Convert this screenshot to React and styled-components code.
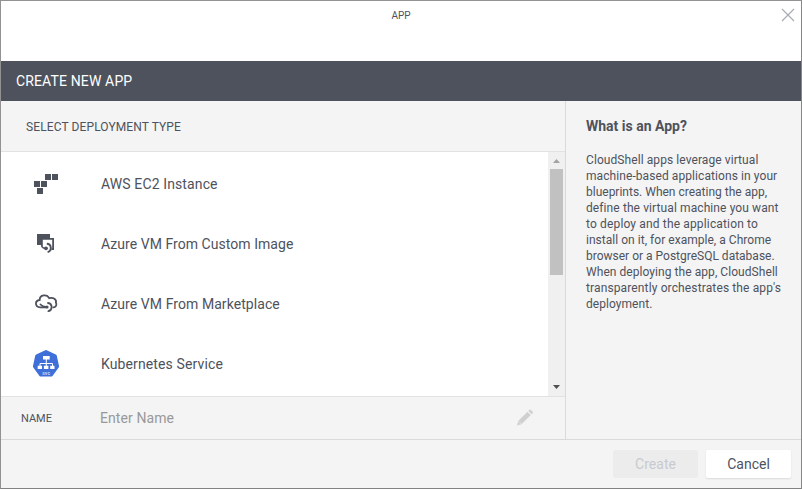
import React from "react";
import styled, { createGlobalStyle } from "styled-components";

const GlobalStyle = createGlobalStyle`
  * { box-sizing: border-box; }
  body { margin: 0; font-family: Roboto, "Liberation Sans", sans-serif; color: #4e525d; }
  h1, h2, h3, p, ul { margin: 0; padding: 0; }
  button, input { font-family: inherit; }
`;

const Dialog = styled.div`
  width: 802px;
  height: 489px;
  display: flex;
  flex-direction: column;
  background: #f4f4f4;
  border: 1px solid #929292;
  border-right-color: #868686;
  border-bottom-color: #828282;
`;

const TopBar = styled.header`
  flex: 0 0 60px;
  display: grid;
  grid-template-columns: 30px 1fr 30px;
  align-items: start;
  background: #fff;
`;

const TopTitle = styled.h1`
  grid-column: 2;
  padding-top: 8px;
  text-align: center;
  font-size: 10px;
  line-height: 14px;
  font-weight: 400;
`;

const CloseButton = styled.button`
  display: flex;
  width: 14px;
  height: 14px;
  margin: 7px 0 0 10px;
  padding: 0;
  border: 0;
  background: none;
`;

const TitleBar = styled.h2`
  flex: 0 0 40px;
  padding-left: 15px;
  background: #4e525d;
  color: #fff;
  font-size: 14px;
  line-height: 40px;
  font-weight: 400;
  letter-spacing: 0.14px;
`;

const Body = styled.div`
  flex: 0 0 338px;
  display: flex;
`;

const Main = styled.main`
  flex: 0 0 564px;
  display: flex;
  flex-direction: column;
`;

const SectionHeader = styled.h3`
  flex: 0 0 51px;
  padding: 2px 0 0 25px;
  border-bottom: 1px solid #e2e2e2;
  font-size: 12px;
  line-height: 48px;
  font-weight: 400;
  letter-spacing: 0.11px;
`;

const ListArea = styled.div`
  flex: 0 0 244px;
  display: flex;
  background: #fff;
`;

const List = styled.ul`
  flex: 1;
  padding-top: 2px;
  list-style: none;
`;

const Item = styled.li`
  height: 60px;
  display: flex;
  align-items: center;
  font-size: 14px;
  letter-spacing: ${(p) => p.$spacing}px;
`;

const IconSlot = styled.span`
  flex: 0 0 100px;
  height: 60px;
  display: flex;
  padding-left: 30px;

  svg { display: block; margin-top: 14px; }
`;

const Scrollbar = styled.div`
  flex: 0 0 17px;
  display: flex;
  flex-direction: column;
  align-items: center;
  background: #f0f0f0;
`;

const Arrow = styled.svg`
  flex: 0 0 17px;
  width: 17px;
  height: 17px;
  fill: ${(p) => p.$color};
`;

const Track = styled.div`
  flex: 1;
  width: 13px;
`;

const Thumb = styled.div`
  height: 106px;
  background: #c1c1c1;
`;

const NameRow = styled.label`
  flex: 0 0 43px;
  display: flex;
  align-items: center;
  padding: 0 31px 0 20px;
  border-top: 1px solid #e2e2e2;
`;

const NameLabel = styled.span`
  flex: 0 0 79px;
  font-size: 11px;
`;

const NameInput = styled.input`
  flex: 1;
  min-width: 0;
  height: 30px;
  padding: 0;
  border: 0;
  background: none;
  font-size: 14px;
  letter-spacing: 0.08px;

  &::placeholder { color: #999; opacity: 1; }
`;

const Help = styled.aside`
  flex: 1;
  padding: 16px 15px 0 20px;
  border-left: 1px solid #dadada;
`;

const HelpTitle = styled.h3`
  font-size: 14px;
  line-height: 18px;
  font-weight: 700;
`;

const HelpText = styled.p`
  padding-top: 17px;
  font-size: 12px;
  line-height: 16px;
  white-space: nowrap;
`;

const HelpLine = styled.span`
  display: block;
  letter-spacing: ${(p) => p.$spacing}px;
`;

const Footer = styled.footer`
  flex: 1;
  display: flex;
  justify-content: flex-end;
  gap: 8px;
  padding: 10px 10px 0 0;
  border-top: 1px solid #dadada;
`;

const Button = styled.button`
  width: 85px;
  height: 28px;
  padding: 0;
  border: 0;
  border-radius: 2px;
  font-size: 14px;
  line-height: 28px;
  background: ${(p) => (p.disabled ? "#ececec" : "#fff")};
  color: ${(p) => (p.disabled ? "#c8cad0" : "#4e525d")};
  box-shadow: ${(p) => (p.disabled ? "none" : "0 1px 2px rgba(0,0,0,.1)")};
`;

const AwsIcon = () => (
  <svg width="32" height="32" viewBox="0 0 32 32" fill="#4e525d">
    <path d="M14 6h6v6h-6zM21 6h6v6h-6zM3 13h6v6H3zM10 13h6v6h-6zM6 20h6v6H6z" />
  </svg>
);

const AzureImageIcon = () => (
  <svg width="32" height="32" viewBox="0 0 32 32" fill="none" stroke="#4e525d">
    <path d="M6 6h13v4h-8v7H6z" fill="#4e525d" stroke="none" />
    <path d="M10.900 18V10.900H22.100V21.100H20.500" strokeWidth="1.800" />
    <path d="M15.800 15.800c5 .2 5.400 7.200 .8 8.400" strokeWidth="1.900" />
    <path d="M10.500 18c.8 1.500 2 2.500 4.500 2.500" strokeWidth="1.500" />
    <circle cx="15" cy="20.300" r="1.900" fill="#4e525d" stroke="none" />
  </svg>
);

const AzureCloudIcon = () => (
  <svg width="32" height="32" viewBox="0 0 32 32" fill="none" stroke="#4e525d" strokeWidth="1.800" strokeLinecap="round">
    <path d="M15 19.400H9.200C3.800 18.900 3.500 12.600 8.700 12C8.600 6.500 16 5.800 18.200 10.200C22.200 8.800 25.800 11.600 24.900 14.600C26.400 17 24.400 19.400 22.300 19.300" />
    <path d="M9.500 16.500C10.800 18 12.400 18.800 15 18.800" />
    <path d="M17 15C21.700 15.800 21.800 22 17.400 23.200" />
    <circle cx="16" cy="19" r="1.600" fill="#4e525d" stroke="none" />
  </svg>
);

const SvcLabel = styled.text`
  font-size: 5px;
  font-weight: 700;
  fill: #c4d2f5;
  text-anchor: middle;
`;

const KubernetesIcon = () => (
  <svg width="32" height="32" viewBox="0 0 32 32">
    <path d="M14.300 2.200q.7-.3 1.400 0l9.100 4.300q.8.400 1 1.200l2.200 10.300q.2.800-.3 1.500l-6.200 8.400q-.5.700-1.300.7H9.800q-.8 0-1.300-.7L2.300 19.500q-.5-.7-.3-1.500L4.200 7.700q.2-.8 1-1.200z" fill="#3f70da" />
    <path d="M15.300 11v7M9 18v-2.500h12.500V18" stroke="#fff" strokeWidth="1" fill="none" />
    <path d="M12 8h6.700v3.500H12zM6.700 17.700H11V21H6.700zM12.900 17.700h4.500V21h-4.500zM19.200 17.700h4.300V21h-4.300z" fill="#fff" />
    <SvcLabel x="15.200" y="26.500">svc</SvcLabel>
  </svg>
);

const Pencil = () => (
  <svg width="18" height="18" viewBox="0 0 18 18" fill="#d0d0d0">
    <path d="M2.200 12L11.500 2.700l3.300 3.300L5.500 15.300L1 16.600z" />
    <path d="M12.300 1.900l1.100-1.100q.6-.6 1.300 0l2 2q.7.700 0 1.400l-1.100 1.100z" />
    <path d="M11.500 2.500l3.500 3.500M2.500 12.200L5.300 15" stroke="#f4f4f4" strokeWidth=".6" />
  </svg>
);

const ITEMS = [
  { name: "AWS EC2 Instance", spacing: 0.12, Icon: AwsIcon },
  { name: "Azure VM From Custom Image", spacing: 0.05, Icon: AzureImageIcon },
  { name: "Azure VM From Marketplace", spacing: 0.07, Icon: AzureCloudIcon },
  { name: "Kubernetes Service", spacing: 0.12, Icon: KubernetesIcon },
];

const HELP_LINES = [
  { text: "CloudShell apps leverage virtual", spacing: 0.08 },
  { text: "machine-based applications in your", spacing: 0.08 },
  { text: "blueprints. When creating the app,", spacing: 0 },
  { text: "define the virtual machine you want", spacing: 0.1 },
  { text: "to deploy and the application to", spacing: 0.15 },
  { text: "install on it, for example, a Chrome", spacing: 0.03 },
  { text: "browser or a PostgreSQL database.", spacing: 0 },
  { text: "When deploying the app, CloudShell", spacing: 0.06 },
  { text: "transparently orchestrates the app's", spacing: 0.13 },
  { text: "deployment.", spacing: 0.05 },
];

export default function App() {
  return (
    <>
      <GlobalStyle />
      <Dialog>
        <TopBar>
          <TopTitle>APP</TopTitle>
          <CloseButton aria-label="Close">
            <svg width="14" height="14" viewBox="0 0 14 14" stroke="#a6abb5" strokeWidth="1.200">
              <path d="M1 1l12 12M13 1L1 13" />
            </svg>
          </CloseButton>
        </TopBar>
        <TitleBar>CREATE NEW APP</TitleBar>
        <Body>
          <Main>
            <SectionHeader>SELECT DEPLOYMENT TYPE</SectionHeader>
            <ListArea>
              <List>
                {ITEMS.map(({ name, spacing, Icon }) => (
                  <Item key={name} $spacing={spacing}>
                    <IconSlot><Icon /></IconSlot>
                    {name}
                  </Item>
                ))}
              </List>
              <Scrollbar>
                <Arrow $color="#a3a3a3" viewBox="0 0 17 17"><path d="M5 11h7L8.500 7z" /></Arrow>
                <Track><Thumb /></Track>
                <Arrow $color="#505050" viewBox="0 0 17 17"><path d="M5 6h7L8.500 10z" /></Arrow>
              </Scrollbar>
            </ListArea>
            <NameRow>
              <NameLabel>NAME</NameLabel>
              <NameInput placeholder="Enter Name" />
              <Pencil />
            </NameRow>
          </Main>
          <Help>
            <HelpTitle>What is an App?</HelpTitle>
            <HelpText>
              {HELP_LINES.map(({ text, spacing }) => (
                <HelpLine key={text} $spacing={spacing}>{text}</HelpLine>
              ))}
            </HelpText>
          </Help>
        </Body>
        <Footer>
          <Button disabled>Create</Button>
          <Button>Cancel</Button>
        </Footer>
      </Dialog>
    </>
  );
}
